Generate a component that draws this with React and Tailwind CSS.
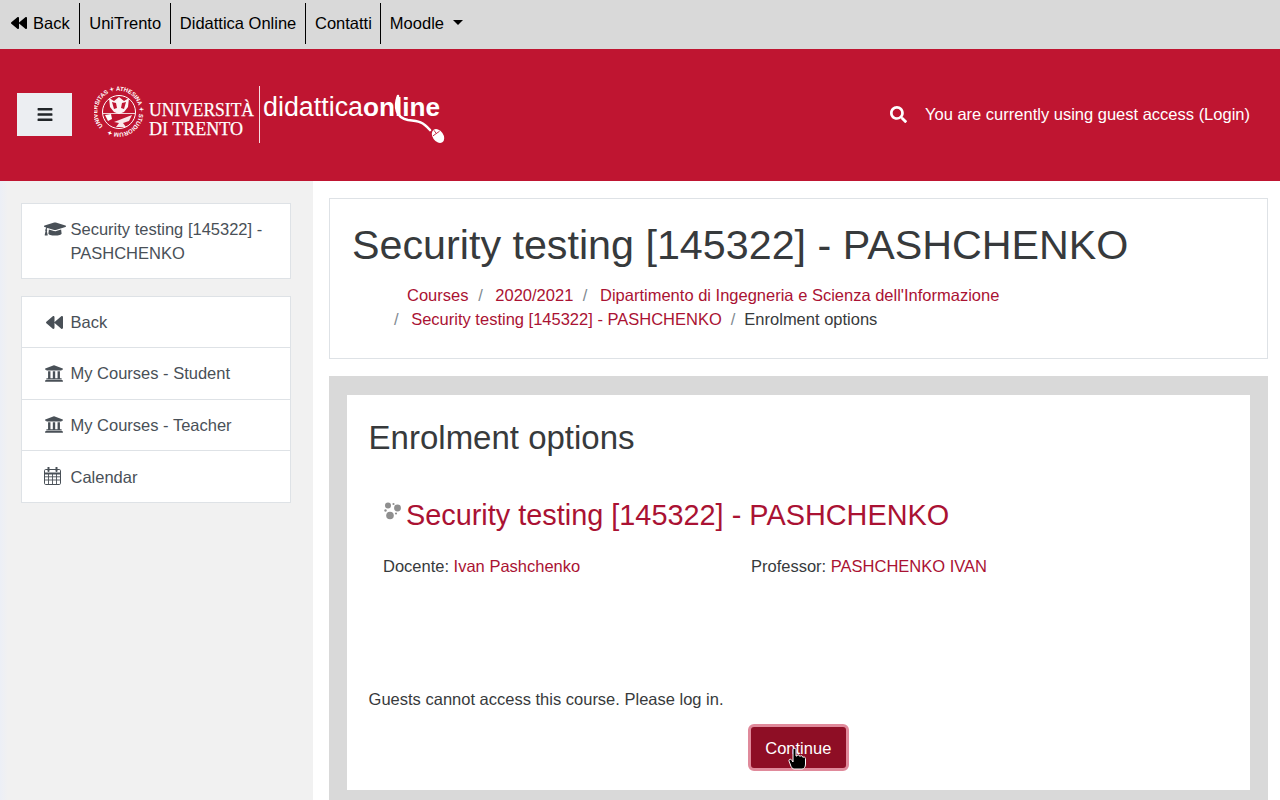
import React from "react";
import { FaBackward, FaBars, FaSearch, FaGraduationCap, FaUniversity } from "react-icons/fa";

function Logo() {
  return (
    <svg width="352" height="60" viewBox="0 0 352 60" className="block shrink-0">
      <defs>
        <path id="sealRing" d="M9 40 A21 21 0 1 1 10 41 Z" />
      </defs>
      <circle cx="25" cy="26" r="16.5" fill="none" stroke="#fff" strokeWidth="1" />
      <text fontFamily="'Liberation Sans', sans-serif" fontSize="6" fontWeight="700" fill="#fff">
        <textPath href="#sealRing" textLength="125" lengthAdjust="spacing">UNIVERSITAS ✦ ATHESINA ✦ STUDIORUM ✦</textPath>
      </text>
      <g fill="#fff">
        <path d="M15 12 L20 15 L25 11 L30 15 L35 12 L34 21 L30 26 L25 28 L20 26 L16 21 Z" opacity="0.95" />
        <path d="M18 16 L22 17 L23 22 L20 23 Z M32 16 L28 17 L27 22 L30 23 Z" fill="#bf1531" />
        <path d="M11 29 L17 28 L18 33 L14 35 Z" />
        <path d="M20 36 L38 29 L35 35 L29 37 L32 41 L22 41 L25 37 Z" opacity="0.9" />
      </g>
      <path d="M9 27.5 H41" stroke="#fff" strokeWidth="0.8" />
      <text x="55" y="30" fontFamily="'Liberation Serif', serif" fontSize="19" fill="#fff" stroke="#fff" strokeWidth="0.25" textLength="105" lengthAdjust="spacingAndGlyphs">UNIVERSITÀ</text>
      <text x="55" y="49" fontFamily="'Liberation Serif', serif" fontSize="19" fill="#fff" stroke="#fff" strokeWidth="0.25" textLength="94" lengthAdjust="spacingAndGlyphs">DI TRENTO</text>
      <rect x="165" y="0" width="1" height="57" fill="#fff" opacity="0.85" />
      <text x="169" y="30" fontFamily="'Liberation Sans', sans-serif" fontSize="27" fill="#fff" textLength="100" lengthAdjust="spacingAndGlyphs">didattica</text>
      <text x="269" y="30" fontFamily="'Liberation Sans', sans-serif" fontWeight="700" fontSize="26" fill="#fff" textLength="77" lengthAdjust="spacingAndGlyphs">online</text>
      <path d="M304 10 C300 21 302 32 314 34 C325 35 329 36 336 44" fill="none" stroke="#fff" strokeWidth="2.6" strokeLinecap="round" />
      <g transform="rotate(-35 344 50)">
        <ellipse cx="344" cy="50" rx="5.4" ry="7.6" fill="#fff" />
        <path d="M340 47 H348 M344 43 V47" stroke="#bf1531" strokeWidth="0.8" />
      </g>
    </svg>
  );
}

function CalendarIcon() {
  return (
    <svg width="17" height="18" viewBox="0 0 17 18" className="mb-[1px] block" fill="none" stroke="currentColor">
      <rect x="0.5" y="2.5" width="16" height="15" rx="1.2" strokeWidth="1" />
      <path d="M0.5 6.5 H16.5" strokeWidth="2" />
      <path d="M0.5 9.8 H16.5 M0.5 13 H16.5 M4.5 6 V17.5 M8.5 6 V17.5 M12.5 6 V17.5" strokeWidth="0.9" />
      <path d="M4.5 0.5 V4 M12.5 0.5 V4" strokeWidth="2" strokeLinecap="round" />
    </svg>
  );
}

function TopItem({ children, first, last, pr = "pr-[8.7px]" }) {
  return (
    <a className={`flex h-[41px] items-center text-[16.5px] text-black ${first ? "pl-[11px]" : "pl-[9px]"} ${last ? "" : `border-r border-black ${pr}`}`}>
      {children}
    </a>
  );
}

function SideRow({ icon, children, last }) {
  return (
    <div className={`flex h-[51.3px] items-center pl-[22px] text-[#495057] ${last ? "" : "border-b border-[#dee2e6]"}`}>
      <span className="flex w-[26.5px] shrink-0 items-center">{icon}</span>
      <span>{children}</span>
    </div>
  );
}

function Crumb({ children, sep, cls = "", gap = "mr-[12.6px]" }) {
  return (
    <span className={`flex ${cls}`}>
      {sep && <span className={`${gap} text-[#818a91]`}>/</span>}
      {children}
    </span>
  );
}

export default function App() {
  const link = "text-[#aa1233]";
  return (
    <div className="flex h-screen flex-col overflow-hidden bg-white font-['Liberation_Sans',Arial,sans-serif] text-[16.5px] leading-[24px] text-[#373a3c]">
      <nav className="flex h-[49px] shrink-0 items-center bg-[#d9d9d9] pb-[3px]">
        <TopItem first pr="pr-[9.6px]">
          <FaBackward className="mr-[6px] h-[16px] w-[16px]" />
          Back
        </TopItem>
        <TopItem>UniTrento</TopItem>
        <TopItem>Didattica Online</TopItem>
        <TopItem pr="pr-[8px]">Contatti</TopItem>
        <TopItem last>
          Moodle
          <span className="ml-[9px] mb-[2px] h-0 w-0 border-x-[5px] border-t-[5px] border-x-transparent border-t-black" />
        </TopItem>
      </nav>

      <header className="flex h-[132px] shrink-0 items-center bg-[#bf1531] pl-[17px] pr-[30px] text-white">
        <button className="mb-[1px] flex h-[43px] w-[55px] items-center justify-center bg-[#eceef2] text-[#212529]">
          <FaBars className="h-[17px] w-[16px]" />
        </button>
        <div className="ml-[22px] mt-[1px]">
          <Logo />
        </div>
        <div className="ml-auto mb-[2px] flex items-center">
          <FaSearch className="mr-[18px] h-[17px] w-[17px]" />
          <span>You are currently using guest access (Login)</span>
        </div>
      </header>

      <div className="flex min-h-0 flex-1">
        <aside className="w-[313px] shrink-0 bg-[linear-gradient(90deg,#eceff6,#f1f1f1_8px)] pl-[21px] pr-[22px] pt-[22px]">
          <div className="flex h-[76px] border border-[#dee2e6] bg-white pl-[22px] pr-2 pt-[13px] text-[#495057]">
            <span className="w-[26.5px] shrink-0 pt-[3px]">
              <FaGraduationCap className="h-[18px] w-[22px]" />
            </span>
            <span>Security testing [145322] - PASHCHENKO</span>
          </div>
          <div className="mt-[17px] border border-[#dee2e6] bg-white">
            <SideRow icon={<FaBackward className="ml-[2px] h-[17px] w-[17px]" />}>Back</SideRow>
            <SideRow icon={<FaUniversity className="h-[19px] w-[20px]" />}>My Courses - Student</SideRow>
            <SideRow icon={<FaUniversity className="h-[19px] w-[20px]" />}>My Courses - Teacher</SideRow>
            <SideRow last icon={<CalendarIcon />}>Calendar</SideRow>
          </div>
        </aside>

        <main className="min-w-0 flex-1 pl-[16px] pr-[12px] pt-[17px]">
          <section className="h-[161px] border border-[#dee2e6] bg-white pl-[22px] pt-[22px]">
            <h1 className="text-[41.25px] font-normal leading-[48px]">Security testing [145322] - PASHCHENKO</h1>
            <div className="mt-[14px] flex flex-wrap pl-[42px] pr-4">
              <Crumb cls="ml-[13px] mr-[9.7px]"><a className={link}>Courses</a></Crumb>
              <Crumb sep cls="mr-[9.5px]"><a className={link}>2020/2021</a></Crumb>
              <Crumb sep cls="mr-[9px]"><a className={link}>Dipartimento di Ingegneria e Scienza dell'Informazione</a></Crumb>
              <Crumb sep cls="mr-[9px]"><a className={link}>Security testing [145322] - PASHCHENKO</a></Crumb>
              <Crumb sep gap="mr-[9px]">Enrolment options</Crumb>
            </div>
          </section>

          <section className="mt-[17px] h-[500px] bg-[#d9d9d9] px-[18px] pt-[19px]">
            <div className="h-[395px] bg-white pl-[21.6px] pr-[22px] pt-[24px]">
              <h2 className="text-[33px] font-normal leading-[38px]">Enrolment options</h2>
              <div className="mt-[41px] flex items-start pl-[14.4px]">
                <svg width="20" height="20" viewBox="0 0 20 20" className="mt-[3px] mr-[3px] shrink-0" fill="#8f8f8f">
                  <circle cx="5" cy="4.5" r="3" />
                  <circle cx="14.5" cy="7" r="3.4" />
                  <circle cx="7" cy="14.5" r="3.8" />
                  <circle cx="2.5" cy="9.5" r="1.2" />
                  <circle cx="10.5" cy="3" r="1.1" />
                  <circle cx="13" cy="12.5" r="1.1" />
                </svg>
                <h3 className={`text-[28.875px] font-normal leading-[34px] ${link}`}>Security testing [145322] - PASHCHENKO</h3>
              </div>
              <div className="mt-[22px] flex pl-[14.4px]">
                <p className="w-[368px]">Docente: <a className={link}>Ivan Pashchenko</a></p>
                <p>Professor: <a className={link}>PASHCHENKO IVAN</a></p>
              </div>
              <p className="mt-[109px]">Guests cannot access this course. Please log in.</p>
              <div className="mt-[13px] flex justify-center">
                <button className="relative h-[47px] w-[101px] rounded-[6px] border-[3px] border-[#e08a9b] bg-[#8e0e25] pt-[1px] text-white">
                  Continue
                  <svg width="22" height="24" viewBox="0 0 22 24" className="absolute left-[36px] top-[20px]">
                    <path d="M6 2.5 C6 1 9 1 9 2.5 V9 L10 9 C10 7.5 12.5 7.5 12.5 9 L13 9.5 C13.5 8 15.5 8.5 15.5 10 L16 10.5 C16.5 9.5 18.5 10 18.5 11.5 V17 C18.5 20 17 22 15 22 H7 C5.5 22 4 20 3.5 18 L2 14 C1.5 12 4 11.5 5 13.5 L6 15 Z" fill="#000" stroke="#fff" strokeWidth="1" />
                  </svg>
                </button>
              </div>
            </div>
          </section>
        </main>
      </div>
    </div>
  );
}
